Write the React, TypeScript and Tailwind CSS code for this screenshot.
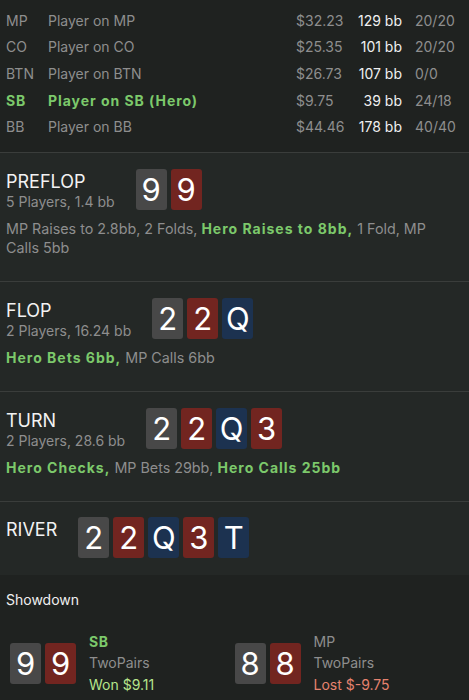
import React from "react";

type Card = { r: string; c: "g" | "r" | "b" };

const cardBg: Record<string, string> = {
  g: "bg-[#484848]",
  r: "bg-[#722520]",
  b: "bg-[#1c3250]",
};

function Cards({ cards }: { cards: Card[] }) {
  return (
    <div className="flex gap-[4px]">
      {cards.map((k, i) => (
        <div
          key={i}
          className={`${cardBg[k.c]} w-[31px] h-[41px] rounded-[3px] flex items-center justify-center text-white text-[31px] leading-none`}
        >
          {k.r}
        </div>
      ))}
    </div>
  );
}

const players = [
  { pos: "MP", name: "Player on MP", usd: "$32.23", bb: "129 bb", st: "20/20" },
  { pos: "CO", name: "Player on CO", usd: "$25.35", bb: "101 bb", st: "20/20" },
  { pos: "BTN", name: "Player on BTN", usd: "$26.73", bb: "107 bb", st: "0/0" },
  { pos: "SB", name: "Player on SB (Hero)", usd: "$9.75", bb: "39 bb", st: "24/18", hero: true },
  { pos: "BB", name: "Player on BB", usd: "$44.46", bb: "178 bb", st: "40/40" },
];

type Seg = { t: string; h?: boolean };

function Street({
  title,
  sub,
  cards,
  actions,
}: {
  title: string;
  sub?: string;
  cards: Card[];
  actions?: Seg[];
}) {
  return (
    <div className="bg-[#242826] border-b border-[#3a3d3b] pl-[6px] pr-[6px] pt-[16px] pb-[24px]">
      <div className="flex items-center gap-[21px] h-[41px]">
        <div className="flex flex-col mt-[3px]">
          <div className="text-[#f2f2f2] text-[18px] leading-[21px]">{title}</div>
          {sub && <div className="text-[#8e8e8e] text-[14px] leading-[19px]">{sub}</div>}
        </div>
        <Cards cards={cards} />
      </div>
      {actions && (
        <div className="mt-[9px] max-w-[430px] text-[14.3px] leading-[19px] text-[#8e8e8e]">
          {actions.map((s, i) =>
            s.h ? (
              <span key={i} className="font-bold text-[14px] tracking-[1px] text-[#7cc96b]">
                {s.t}
              </span>
            ) : (
              <span key={i}>{s.t}</span>
            )
          )}
        </div>
      )}
    </div>
  );
}

function Hand({
  cards,
  pos,
  won,
  result,
}: {
  cards: Card[];
  pos: string;
  won: boolean;
  result: string;
}) {
  return (
    <div className="flex items-center gap-[13px]">
      <Cards cards={cards} />
      <div className="flex flex-col text-[14px] leading-[21.5px]">
        <div className={won ? "font-bold tracking-[0.5px] text-[#7cc96b]" : "text-[#8e8e8e]"}>{pos}</div>
        <div className="text-[#8e8e8e]">TwoPairs</div>
        <div className={won ? "text-[#b6e58c]" : "text-[#e6826f]"}>{result}</div>
      </div>
    </div>
  );
}

export default function App() {
  return (
    <div
      className="w-[469px] h-[700px] overflow-hidden bg-[#1f2220]"
      style={{ fontFamily: 'Inter, "Liberation Sans", Arial, sans-serif' }}
    >
      <div className="bg-[#1f2220] border-b border-[#3a3d3b] pt-[7px] pb-[12px] px-[6px] text-[14px]">
        {players.map((p) => (
          <div
            key={p.pos}
            className="grid grid-cols-[42px_1fr_54px_52px_61px] h-[26.6px] items-center"
          >
            <div className={p.hero ? "font-bold tracking-[0.8px] text-[#7cc96b]" : "text-[#8e8e8e]"}>{p.pos}</div>
            <div className={p.hero ? "font-bold tracking-[0.95px] text-[#7cc96b]" : "text-[#8e8e8e]"}>{p.name}</div>
            <div className="text-[#8e8e8e]">{p.usd}</div>
            <div className="text-[#f0f0f0] text-right">{p.bb}</div>
            <div className="text-[#8e8e8e] pl-[13px]">{p.st}</div>
          </div>
        ))}
      </div>
      <Street
        title="PREFLOP"
        sub="5 Players, 1.4 bb"
        cards={[
          { r: "9", c: "g" },
          { r: "9", c: "r" },
        ]}
        actions={[
          { t: "MP Raises to 2.8bb, 2 Folds, " },
          { t: "Hero Raises to 8bb,", h: true },
          { t: " 1 Fold, MP Calls 5bb" },
        ]}
      />
      <Street
        title="FLOP"
        sub="2 Players, 16.24 bb"
        cards={[
          { r: "2", c: "g" },
          { r: "2", c: "r" },
          { r: "Q", c: "b" },
        ]}
        actions={[{ t: "Hero Bets 6bb,", h: true }, { t: " MP Calls 6bb" }]}
      />
      <Street
        title="TURN"
        sub="2 Players, 28.6 bb"
        cards={[
          { r: "2", c: "g" },
          { r: "2", c: "r" },
          { r: "Q", c: "b" },
          { r: "3", c: "r" },
        ]}
        actions={[
          { t: "Hero Checks,", h: true },
          { t: " MP Bets 29bb, " },
          { t: "Hero Calls 25bb", h: true },
        ]}
      />
      <div className="bg-[#242826] px-[6px] pt-[15px] pb-[17px]">
        <div className="flex items-center gap-[21px] h-[41px]">
          <div className="text-[#f2f2f2] text-[18px] leading-[21px] -mt-[15px]">RIVER</div>
          <Cards
            cards={[
              { r: "2", c: "g" },
              { r: "2", c: "r" },
              { r: "Q", c: "b" },
              { r: "3", c: "r" },
              { r: "T", c: "b" },
            ]}
          />
        </div>
      </div>
      <div className="bg-[#1f2220] pt-[15px]">
        <div className="px-[6px] text-[14px] leading-[20px] text-[#f0f0f0]">Showdown</div>
        <div className="grid grid-cols-2 px-[10px] mt-[21px]">
          <Hand
            cards={[
              { r: "9", c: "g" },
              { r: "9", c: "r" },
            ]}
            pos="SB"
            won
            result="Won $9.11"
          />
          <Hand
            cards={[
              { r: "8", c: "g" },
              { r: "8", c: "r" },
            ]}
            pos="MP"
            won={false}
            result="Lost $-9.75"
          />
        </div>
      </div>
    </div>
  );
}
